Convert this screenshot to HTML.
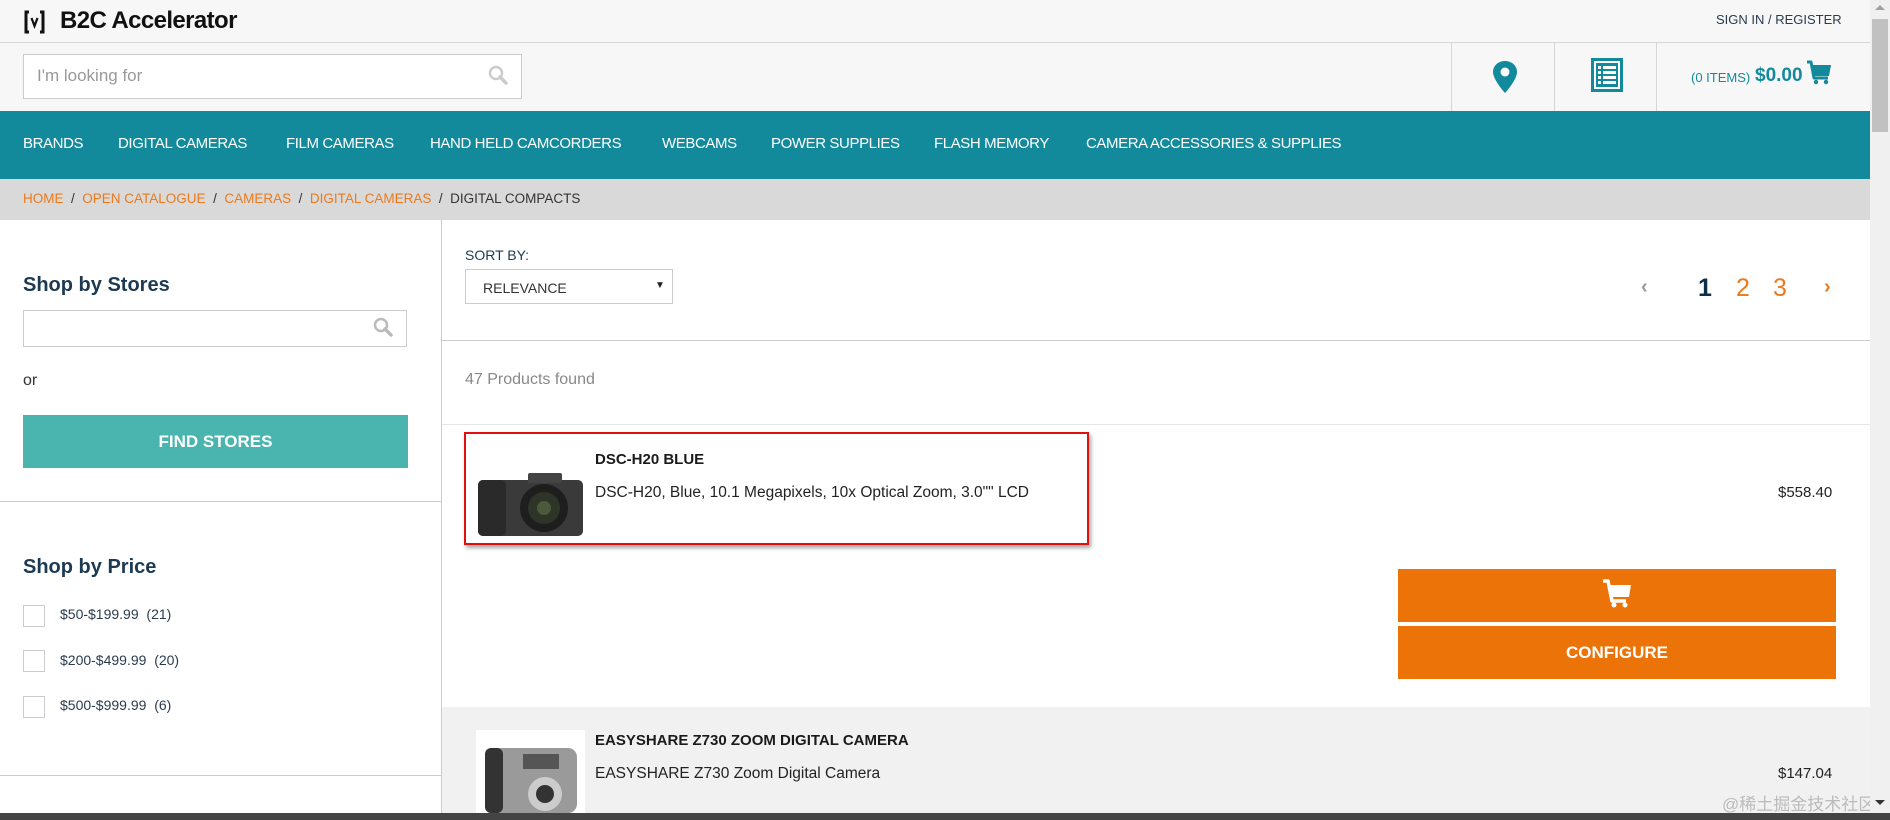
<!DOCTYPE html>
<html><head><meta charset="utf-8"><style>
*{margin:0;padding:0;box-sizing:border-box}
body{width:1890px;height:820px;overflow:hidden;background:#fff;font-family:"Liberation Sans","Noto Sans CJK SC",sans-serif;position:relative;color:#333}
.a{position:absolute;white-space:nowrap}
.nav{color:#fff;font-size:15px;top:135px;letter-spacing:-0.4px}
.bc{font-size:13.5px;top:191px;color:#ec7a1c}
</style></head><body>
<!-- header -->
<div class="a" style="left:0;top:0;width:1870px;height:111px;background:#f7f7f7"></div>
<div class="a" style="left:0;top:42px;width:1870px;height:1px;background:#d6d6d6"></div>
<svg class="a" style="left:23px;top:10px" width="23" height="24" viewBox="0 0 23 24"><path d="M6 2H3v20h3M17 2h3v20h-3" fill="none" stroke="#111" stroke-width="3"/><path d="M8.5 8l3 8 3-8" fill="none" stroke="#111" stroke-width="2.2"/></svg>
<div class="a" style="left:60px;top:7px;font-size:24px;font-weight:bold;color:#111;letter-spacing:-0.6px">B2C Accelerator</div>
<div class="a" style="left:1716px;top:12px;font-size:13px;color:#2b3b4e">SIGN IN / REGISTER</div>
<div class="a" style="left:23px;top:54px;width:499px;height:45px;background:#fff;border:1px solid #ccc"></div>
<div class="a" style="left:37px;top:66px;font-size:17px;color:#999">I'm looking for</div>
<svg class="a" style="left:487px;top:64px" width="22" height="22" viewBox="0 0 22 22"><circle cx="9" cy="9" r="6" fill="none" stroke="#ccc" stroke-width="2.5"/><path d="M13 13l6 6" stroke="#ccc" stroke-width="3.5" stroke-linecap="round"/></svg>
<div class="a" style="left:1451px;top:43px;width:1px;height:68px;background:#d6d6d6"></div>
<div class="a" style="left:1554px;top:43px;width:1px;height:68px;background:#d6d6d6"></div>
<div class="a" style="left:1656px;top:43px;width:1px;height:68px;background:#d6d6d6"></div>
<svg class="a" style="left:1492px;top:60px" width="26" height="34" viewBox="0 0 26 34"><path d="M13 1C6 1 1 6 1 12c0 8 12 21 12 21s12-13 12-21C25 6 20 1 13 1z" fill="#128a9c"/><circle cx="13" cy="12" r="4.5" fill="#fff"/></svg>
<svg class="a" style="left:1591px;top:58px" width="32" height="34" viewBox="0 0 32 34"><rect x="0" y="0" width="32" height="34" fill="#128a9c"/><rect x="3" y="3" width="26" height="28" fill="#fff"/><rect x="5" y="5" width="22" height="24" fill="#128a9c"/><g fill="#fff"><rect x="7" y="8" width="3" height="3"/><rect x="12" y="8" width="13" height="3"/><rect x="7" y="13" width="3" height="3"/><rect x="12" y="13" width="13" height="3"/><rect x="7" y="18" width="3" height="3"/><rect x="12" y="18" width="13" height="3"/><rect x="7" y="23" width="3" height="3"/><rect x="12" y="23" width="13" height="3"/></g></svg>
<div class="a" style="left:1691px;top:70px;font-size:13px;color:#128a9c">(0 ITEMS)</div>
<div class="a" style="left:1755px;top:65px;font-size:19px;font-weight:bold;color:#128a9c">$0.00</div>
<svg class="a" style="left:1806px;top:60px" width="26" height="26" viewBox="0 0 26 26"><path d="M1 2h4l3 16h14" fill="none" stroke="#128a9c" stroke-width="3" stroke-linejoin="round"/><path d="M6 5h19l-2 11H8z" fill="#128a9c"/><circle cx="10" cy="22" r="2.2" fill="#128a9c"/><circle cx="20" cy="22" r="2.2" fill="#128a9c"/></svg>
<!-- nav -->
<div class="a" style="left:0;top:111px;width:1870px;height:68px;background:#128a9c"></div>
<div class="a nav" style="left:23px">BRANDS</div>
<div class="a nav" style="left:118px">DIGITAL CAMERAS</div>
<div class="a nav" style="left:286px">FILM CAMERAS</div>
<div class="a nav" style="left:430px">HAND HELD CAMCORDERS</div>
<div class="a nav" style="left:662px">WEBCAMS</div>
<div class="a nav" style="left:771px">POWER SUPPLIES</div>
<div class="a nav" style="left:934px">FLASH MEMORY</div>
<div class="a nav" style="left:1086px">CAMERA ACCESSORIES &amp; SUPPLIES</div>
<!-- breadcrumb -->
<div class="a" style="left:0;top:179px;width:1870px;height:41px;background:#d9d9d9"></div>
<div class="a bc" style="left:23px">HOME <span style="color:#333">&nbsp;/&nbsp;</span> OPEN CATALOGUE <span style="color:#333">&nbsp;/&nbsp;</span> CAMERAS <span style="color:#333">&nbsp;/&nbsp;</span> DIGITAL CAMERAS <span style="color:#333">&nbsp;/&nbsp; DIGITAL COMPACTS</span></div>
<!-- sidebar -->
<div class="a" style="left:441px;top:220px;width:1px;height:593px;background:#ccc"></div>
<div class="a" style="left:23px;top:274px;font-size:20px;font-weight:bold;color:#1d3a52">Shop by Stores</div>
<div class="a" style="left:23px;top:310px;width:384px;height:37px;border:1px solid #ccc"></div>
<svg class="a" style="left:372px;top:316px" width="22" height="22" viewBox="0 0 22 22"><circle cx="9" cy="9" r="6" fill="none" stroke="#bbb" stroke-width="2.5"/><path d="M13 13l6 6" stroke="#bbb" stroke-width="3.5" stroke-linecap="round"/></svg>
<div class="a" style="left:23px;top:372px;font-size:16px;color:#333">or</div>
<div class="a" style="left:23px;top:415px;width:385px;height:53px;background:#49b5ae;color:#fff;font-weight:bold;font-size:17px;text-align:center;line-height:53px">FIND STORES</div>
<div class="a" style="left:0;top:501px;width:441px;height:1px;background:#ccc"></div>
<div class="a" style="left:23px;top:556px;font-size:20px;font-weight:bold;color:#1d3a52">Shop by Price</div>
<div class="a" style="left:23px;top:605px;width:22px;height:22px;border:1px solid #ccc"></div>
<div class="a" style="left:60px;top:606px;font-size:14px;color:#2b3b4e">$50-$199.99&nbsp; (21)</div>
<div class="a" style="left:23px;top:650px;width:22px;height:22px;border:1px solid #ccc"></div>
<div class="a" style="left:60px;top:652px;font-size:14px;color:#2b3b4e">$200-$499.99&nbsp; (20)</div>
<div class="a" style="left:23px;top:696px;width:22px;height:22px;border:1px solid #ccc"></div>
<div class="a" style="left:60px;top:697px;font-size:14px;color:#2b3b4e">$500-$999.99&nbsp; (6)</div>
<div class="a" style="left:0;top:775px;width:441px;height:1px;background:#ccc"></div>
<!-- main -->
<div class="a" style="left:465px;top:247px;font-size:14px;color:#1d3a52">SORT BY:</div>
<div class="a" style="left:465px;top:269px;width:208px;height:35px;border:1px solid #ccc"></div>
<div class="a" style="left:483px;top:280px;font-size:14px;color:#333">RELEVANCE</div>
<div class="a" style="left:655px;top:280px;font-size:10px;color:#222">&#9660;</div>
<div class="a" style="left:1641px;top:276px;font-size:20px;color:#999;font-weight:bold">&#8249;</div>
<div class="a" style="left:1698px;top:274px;font-size:25px;color:#0f2f48;font-weight:bold">1</div>
<div class="a" style="left:1736px;top:274px;font-size:25px;color:#ec7a1c">2</div>
<div class="a" style="left:1773px;top:274px;font-size:25px;color:#ec7a1c">3</div>
<div class="a" style="left:1824px;top:276px;font-size:20px;color:#ec7a1c;font-weight:bold">&#8250;</div>
<div class="a" style="left:442px;top:340px;width:1428px;height:1px;background:#ccc"></div>
<div class="a" style="left:465px;top:371px;font-size:16px;color:#888">47 Products found</div>
<div class="a" style="left:442px;top:424px;width:1428px;height:1px;background:#e6e6e6"></div>
<!-- product 1 -->
<div class="a" style="left:464px;top:432px;width:625px;height:113px;border:2px solid #e01010;box-shadow:2px 3px 4px rgba(0,0,0,.35)"></div>
<svg class="a" style="left:476px;top:466px" width="109" height="72" viewBox="0 0 109 72"><rect x="2" y="14" width="105" height="56" rx="5" fill="#3a3a3a"/><rect x="52" y="7" width="34" height="10" rx="2" fill="#444"/><rect x="2" y="14" width="28" height="56" rx="5" fill="#2a2a2a"/><circle cx="68" cy="42" r="24" fill="#1e1e1e"/><circle cx="68" cy="42" r="16" fill="#2e3528"/><circle cx="68" cy="42" r="7" fill="#4a5a3a"/></svg>
<div class="a" style="left:595px;top:451px;font-size:15px;font-weight:bold;color:#1a1a1a">DSC-H20 BLUE</div>
<div class="a" style="left:595px;top:484px;font-size:15.5px;color:#222">DSC-H20, Blue, 10.1 Megapixels, 10x Optical Zoom, 3.0"" LCD</div>
<div class="a" style="left:1778px;top:484px;font-size:15px;color:#222">$558.40</div>
<div class="a" style="left:1398px;top:569px;width:438px;height:53px;background:#eb7307"></div>
<svg class="a" style="left:1602px;top:579px" width="30" height="30" viewBox="0 0 30 30"><path d="M1 2h5l4 20h14" fill="none" stroke="#fff" stroke-width="3.5" stroke-linejoin="round"/><path d="M7 6h22l-2 12H10z" fill="#fff"/><circle cx="12" cy="26" r="2.5" fill="#fff"/><circle cx="23" cy="26" r="2.5" fill="#fff"/></svg>
<div class="a" style="left:1398px;top:626px;width:438px;height:53px;background:#eb7307;color:#fff;font-weight:bold;font-size:17px;text-align:center;line-height:53px">CONFIGURE</div>
<!-- product 2 -->
<div class="a" style="left:442px;top:707px;width:1428px;height:106px;background:#f1f1f1"></div>
<div class="a" style="left:476px;top:730px;width:109px;height:83px;background:#fff"></div>
<svg class="a" style="left:483px;top:742px" width="96" height="71" viewBox="0 0 96 71"><rect x="2" y="6" width="92" height="65" rx="9" fill="#9a9a9a"/><rect x="2" y="6" width="18" height="65" rx="6" fill="#333"/><circle cx="62" cy="52" r="17" fill="#ccc"/><circle cx="62" cy="52" r="9" fill="#333"/><rect x="40" y="12" width="36" height="15" fill="#555"/></svg>
<div class="a" style="left:595px;top:732px;font-size:15px;font-weight:bold;color:#1a1a1a">EASYSHARE Z730 ZOOM DIGITAL CAMERA</div>
<div class="a" style="left:595px;top:765px;font-size:15.5px;color:#222">EASYSHARE Z730 Zoom Digital Camera</div>
<div class="a" style="left:1778px;top:765px;font-size:15px;color:#222">$147.04</div>
<div class="a" style="left:1722px;top:790px;font-size:17px;color:#bbb">@稀土掘金技术社区</div>
<!-- scrollbar -->
<div class="a" style="left:1870px;top:0;width:20px;height:813px;background:#f0f0f0"></div>
<div class="a" style="left:1872px;top:19px;width:16px;height:113px;background:#c1c1c1"></div>
<div class="a" style="left:1875px;top:5px;width:0;height:0;border-left:5px solid transparent;border-right:5px solid transparent;border-bottom:5px solid #a0a0a0"></div>
<div class="a" style="left:1875px;top:800px;width:0;height:0;border-left:5px solid transparent;border-right:5px solid transparent;border-top:5px solid #333"></div>
<div class="a" style="left:0;top:813px;width:1890px;height:7px;background:#444"></div>
</body></html>
